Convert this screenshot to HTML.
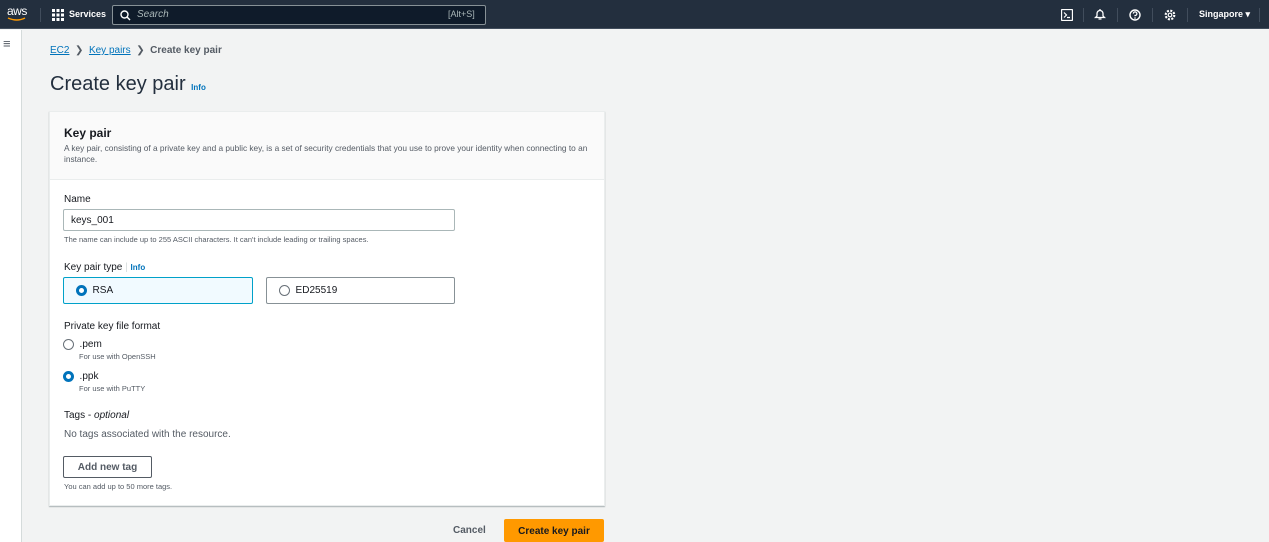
<!DOCTYPE html>
<html><head><style>
*{box-sizing:border-box;margin:0;padding:0}
body{width:1269px;height:542px;overflow:hidden;background:#f2f3f3;font-family:"Liberation Sans",sans-serif;color:#16191f;position:relative}
.a{position:absolute}
.nav{left:0;top:0;width:1269px;height:29px;background:#232f3e;border-bottom:1px solid #414d5c}
.s{font-size:10px;color:#545b64}
.radio{display:inline-block;width:11px;height:11px;border-radius:50%;border:1px solid #687078;background:#fff;vertical-align:middle}
.radio.on{border:3.5px solid #0073bb}
</style></head><body>
<div class="a nav">
 <div class="a" style="left:7px;top:4px;color:#fff;font-size:12px;letter-spacing:-0.5px">aws</div>
 <svg class="a" style="left:7px;top:17px" width="20" height="5"><path d="M1 1 Q10 5 18 1" stroke="#f90" stroke-width="1.5" fill="none"/></svg>
 <div class="a" style="left:40px;top:8px;width:1px;height:14px;background:#414d5c"></div>
 <svg class="a" style="left:52px;top:9px" width="12" height="12" fill="#fff"><rect x="0" y="0" width="3" height="3"/><rect x="4.5" y="0" width="3" height="3"/><rect x="9" y="0" width="3" height="3"/><rect x="0" y="4.5" width="3" height="3"/><rect x="4.5" y="4.5" width="3" height="3"/><rect x="9" y="4.5" width="3" height="3"/><rect x="0" y="9" width="3" height="3"/><rect x="4.5" y="9" width="3" height="3"/><rect x="9" y="9" width="3" height="3"/></svg>
 <div class="a" style="left:69px;top:9px;color:#fff;font-size:9px;font-weight:bold">Services</div>
 <div class="a" style="left:112px;top:5px;width:374px;height:20px;border:1px solid #879196;border-radius:2px;background:#0f1b2a"></div>
 <svg class="a" style="left:120px;top:10px" width="11" height="11"><circle cx="4.5" cy="4.5" r="3.5" stroke="#fff" stroke-width="1.4" fill="none"/><path d="M7 7 L10 10" stroke="#fff" stroke-width="1.5"/></svg>
 <div class="a" style="left:137px;top:9px;color:#aab7b8;font-size:10px;font-style:italic">Search</div>
 <div class="a" style="left:448px;top:9px;color:#aab7b8;font-size:9px">[Alt+S]</div>
 <svg class="a" style="left:1061px;top:9px" width="12" height="12"><rect x="0.5" y="0.5" width="11" height="11" rx="1" stroke="#fff" fill="none" stroke-width="1.3"/><path d="M3 3.5 L5.5 6 L3 8.5 M6 8.5 H9" stroke="#fff" stroke-width="1.2" fill="none"/></svg>
 <div class="a" style="left:1083px;top:8px;width:1px;height:14px;background:#414d5c"></div>
 <svg class="a" style="left:1094px;top:8px" width="12" height="13"><path d="M6 1 L6 2 M3 8 V5.5 A3 3 0 0 1 9 5.5 V8 L10.5 9.5 H1.5 Z M4.5 11 H7.5" stroke="#fff" stroke-width="1.3" fill="none"/></svg>
 <div class="a" style="left:1117px;top:8px;width:1px;height:14px;background:#414d5c"></div>
 <svg class="a" style="left:1129px;top:9px" width="12" height="12"><circle cx="6" cy="6" r="5" stroke="#fff" stroke-width="1.4" fill="none"/><path d="M4.3 4.6 A1.8 1.8 0 1 1 6 6.5 V7.3" stroke="#fff" stroke-width="1.2" fill="none"/><circle cx="6" cy="9" r=".8" fill="#fff"/></svg>
 <div class="a" style="left:1152px;top:8px;width:1px;height:14px;background:#414d5c"></div>
 <svg class="a" style="left:1164px;top:9px" width="12" height="12"><circle cx="6" cy="6" r="4.3" stroke="#fff" stroke-width="2.2" stroke-dasharray="2 1.4" fill="none"/><circle cx="6" cy="6" r="1.8" stroke="#fff" stroke-width="1.2" fill="none"/></svg>
 <div class="a" style="left:1187px;top:8px;width:1px;height:14px;background:#414d5c"></div>
 <div class="a" style="left:1199px;top:9px;color:#fff;font-size:9px;font-weight:bold">Singapore ▾</div>
 <div class="a" style="left:1259px;top:8px;width:1px;height:14px;background:#414d5c"></div>
</div>
<div class="a" style="left:0;top:30px;width:22px;height:512px;background:#fff;border-right:1px solid #d5dbdb"></div>
<div class="a" style="left:3px;top:36px;font-size:13px;color:#545b64">≡</div>
<div class="a" style="left:50px;top:45px;font-size:10px;color:#545b64"><span style="color:#0073bb;text-decoration:underline">EC2</span> &nbsp;❯&nbsp; <span style="color:#0073bb;text-decoration:underline">Key pairs</span> &nbsp;❯&nbsp; <b>Create key pair</b></div>
<div class="a" style="left:50px;top:73px;font-size:20px;color:#232f3e">Create key pair <span style="font-size:8px;color:#0073bb;font-weight:bold">Info</span></div>
<div class="a" style="left:49px;top:111px;width:556px;height:395px;background:#fff;border:1px solid #eaeded;box-shadow:0 1px 1px rgba(0,28,36,.3)"></div>
<div class="a" style="left:50px;top:112px;width:554px;height:68px;background:#fafafa;border-bottom:1px solid #eaeded"></div>
<div class="a" style="left:64px;top:126px;font-size:12px;font-weight:bold">Key pair</div>
<div class="a s" style="left:64px;top:143px;width:535px;font-size:8.3px;line-height:11px">A key pair, consisting of a private key and a public key, is a set of security credentials that you use to prove your identity when connecting to an instance.</div>
<div class="a" style="left:64px;top:194px;font-size:10px;color:#16191f">Name</div>
<div class="a" style="left:63px;top:209px;width:392px;height:22px;border:1px solid #aab7b8;border-radius:2px;background:#fff;font-size:10px;padding:5px 0 0 7px">keys_001</div>
<div class="a s" style="left:64px;top:235px;font-size:7.5px">The name can include up to 255 ASCII characters. It can't include leading or trailing spaces.</div>
<div class="a" style="left:64px;top:262px;font-size:10px">Key pair type <span style="color:#d5dbdb">|</span> <span style="font-size:8px;color:#0073bb;font-weight:bold">Info</span></div>
<div class="a" style="left:63px;top:277px;width:190px;height:27px;border:1px solid #00a1c9;border-radius:2px;background:#f1faff;font-size:10px;padding:7px 0 0 12px"><span class="radio on"></span>&nbsp; RSA</div>
<div class="a" style="left:266px;top:277px;width:189px;height:27px;border:1px solid #879196;border-radius:2px;background:#fff;font-size:10px;padding:7px 0 0 12px"><span class="radio"></span>&nbsp; ED25519</div>
<div class="a" style="left:64px;top:321px;font-size:10px">Private key file format</div>
<div class="a" style="left:63px;top:339px;font-size:10px"><span class="radio"></span>&nbsp; .pem</div>
<div class="a s" style="left:79px;top:352px;font-size:7.5px">For use with OpenSSH</div>
<div class="a" style="left:63px;top:371px;font-size:10px"><span class="radio on"></span>&nbsp; .ppk</div>
<div class="a s" style="left:79px;top:384px;font-size:7.5px">For use with PuTTY</div>
<div class="a" style="left:64px;top:410px;font-size:10px">Tags - <i>optional</i></div>
<div class="a s" style="left:64px;top:429px;font-size:10px">No tags associated with the resource.</div>
<div class="a" style="left:63px;top:456px;width:89px;height:22px;border:1px solid #545b64;border-radius:2px;background:#fff;font-size:10px;font-weight:bold;color:#545b64;text-align:center;padding-top:5px">Add new tag</div>
<div class="a s" style="left:64px;top:482px;font-size:7.5px">You can add up to 50 more tags.</div>
<div class="a" style="left:453px;top:525px;font-size:10px;font-weight:bold;color:#545b64">Cancel</div>
<div class="a" style="left:504px;top:519px;width:100px;height:23px;background:#f90;border:1px solid #f90;border-radius:2px;font-size:10px;font-weight:bold;color:#16191f;text-align:center;padding-top:6px">Create key pair</div>
</body></html>
